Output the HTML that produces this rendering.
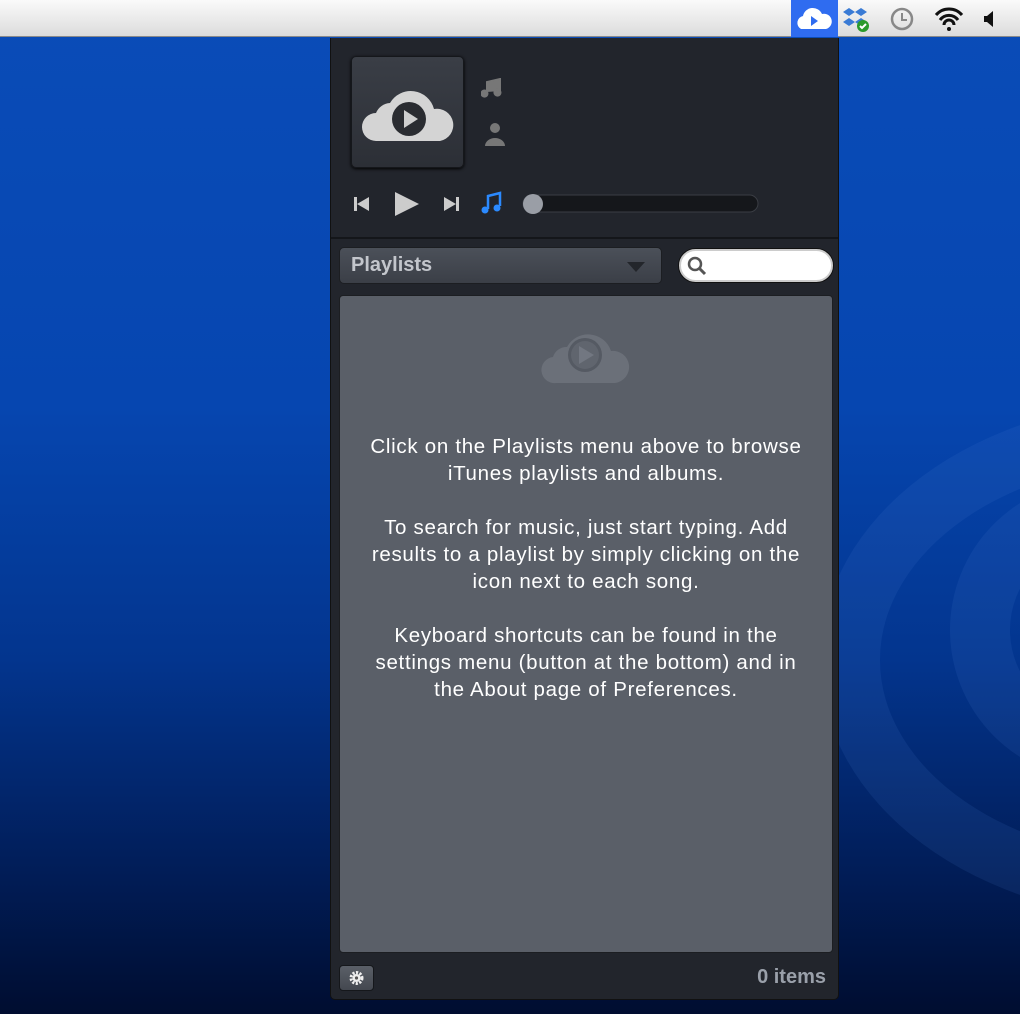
<!DOCTYPE html>
<html><head><meta charset="utf-8"><style>
*{margin:0;padding:0;box-sizing:border-box}
body{width:1020px;height:1014px;overflow:hidden;position:relative;font-family:"Liberation Sans",sans-serif;
background:linear-gradient(180deg,#0a4cb8 0%,#0646b0 40%,#03358e 65%,#011e5a 85%,#000d30 100%)}
.bar{position:absolute;left:0;top:0;width:1020px;height:37px;background:linear-gradient(#fafafa,#dcdcdc);border-bottom:1px solid #8a8a8a}
.arc{position:absolute;border-radius:50%;border:60px solid rgba(80,130,210,.12)}
.panel{position:absolute;left:330px;top:38px;width:509px;height:962px;background:#22252c;border:1px solid #111;border-top:none;border-radius:0 0 5px 5px}
.art{position:absolute;left:20px;top:18px;width:113px;height:112px;border-radius:5px;background:linear-gradient(#3a3e46,#2c2f36);box-shadow:0 1px 3px #000;border:1px solid #15171b}
.sep{position:absolute;left:0;top:199px;width:507px;height:2px;background:#14161a}
.dd{position:absolute;left:8px;top:209px;width:323px;height:37px;border-radius:5px;background:linear-gradient(#4b5059,#3b3f47);border:1px solid #1c1e22;color:#c3c6cc;font-size:20px;font-weight:bold;padding:6px 0 0 11px}
.search{position:absolute;left:348px;top:211px;width:154px;height:33px;border-radius:17px;background:#fff;border:2px solid #ccc;box-shadow:0 0 0 1px #111}
.content{position:absolute;left:8px;top:257px;width:494px;height:658px;background:#5a5f68;border:1px solid #1c1e22;border-radius:4px;color:#fff;text-align:center;font-size:20.5px;letter-spacing:0.7px;line-height:27px}
.content p{margin-bottom:27px;white-space:nowrap}
.gear{position:absolute;left:8px;top:927px;width:35px;height:26px;border-radius:4px;background:linear-gradient(#5a5f68,#444850);border:1px solid #15171b}
.items{position:absolute;right:12px;top:928px;color:#9aa0aa;font-size:20px;font-weight:bold}
</style></head><body>
<div class="arc" style="left:820px;top:400px;width:700px;height:520px"></div>
<div class="arc" style="left:950px;top:480px;width:300px;height:300px"></div>
<div class="bar">
 <div style="position:absolute;left:791px;top:0;width:47px;height:37px;background:#2f6cf0"></div>
 <svg style="position:absolute;left:791px;top:0" width="229" height="37">
  <path d="M10 29 a7 7 0 0 1 2-13 a10 10 0 0 1 19-2 a7 7 0 0 1 4 15z" fill="#fff"/>
  <path d="M20 16 l7 5 -7 5z" fill="#2f6cf0"/>
  <g fill="#3a7bd5"><path d="M58 8 l6 4 -6 4 -6-4z M70 8 l6 4 -6 4 -6-4z M58 18 l6 4 -6 4 -6-4z M70 18 l6 4 -6 4 -6-4z"/></g>
  <circle cx="72" cy="26" r="6" fill="#2a9a2a"/>
  <path d="M69 26 l2 2 4-4" stroke="#fff" stroke-width="2" fill="none"/>
  <circle cx="111" cy="19" r="10" fill="none" stroke="#888" stroke-width="2.5"/>
  <path d="M111 13 v7 h5" stroke="#888" stroke-width="2" fill="none"/>
  <path d="M145 15 a17 17 0 0 1 26 0 M149 20 a11 11 0 0 1 18 0 M153 25 a5 5 0 0 1 10 0" stroke="#111" stroke-width="3" fill="none"/>
  <circle cx="158" cy="29" r="2" fill="#111"/>
  <path d="M193 16 h3 l6-5 v16 l-6-5 h-3z" fill="#111"/>
 </svg>
</div>
<div class="panel">
 <div class="art"><svg width="113" height="112">
  <path d="M24 84 a14 14 0 0 1 0-28 a16 16 0 0 1 14-10 a24 24 0 0 1 44 6 a16 16 0 0 1 6 32z" fill="#d4d4d4"/>
  <circle cx="57" cy="62" r="17" fill="#2a2c31"/><path d="M52 53 l14 9 -14 9z" fill="#cfcfcf"/></svg></div>
 <svg style="position:absolute;left:150px;top:40px" width="30" height="75">
  <path d="M6 14 v-10 l13-3 v12 M6 14 a3 3 0 1 1-1-1 M19 13 a3 3 0 1 1-1-1" stroke="#777" stroke-width="2" fill="#777"/>
  <circle cx="14" cy="50" r="5" fill="#777"/><path d="M4 68 a10 8 0 0 1 20 0z" fill="#777"/>
 </svg>
 <svg style="position:absolute;left:20px;top:150px" width="420" height="35">
  <path d="M3 9 h3 v14 h-3z M18 9 v14 l-12-7z" fill="#ccc"/>
  <path d="M44 4 l24 12 -24 12z" fill="#ccc"/>
  <path d="M93 9 v14 l12-7z M105 9 h3 v14 h-3z" fill="#ccc"/>
  <path d="M137 21 v-13 l12-3 v13" stroke="#2b8aff" stroke-width="2.5" fill="none"/>
  <circle cx="134" cy="22" r="3.5" fill="#2b8aff"/><circle cx="146" cy="20" r="3.5" fill="#2b8aff"/>
  <rect x="172" y="7" width="235" height="17" rx="8.5" fill="#15171b" stroke="#3a3d44"/>
  <circle cx="182" cy="16" r="10" fill="#9a9ea6"/>
 </svg>
 <div class="sep"></div>
 <div class="dd">Playlists<svg style="position:absolute;right:16px;top:14px" width="18" height="10"><path d="M0 0 h18 l-9 10z" fill="#23262b"/></svg></div>
 <div class="search"><svg style="position:absolute;left:6px;top:5px" width="20" height="20"><circle cx="8" cy="8" r="6" stroke="#555" stroke-width="2.5" fill="none"/><path d="M12 12 l6 6" stroke="#555" stroke-width="3"/></svg></div>
 <div class="content">
  <svg style="display:block;margin:22px auto 0" width="96" height="66"><path d="M18 65 a13 13 0 0 1-3-26 a14 14 0 0 1 14-10 a24 24 0 0 1 44 4 a16 16 0 0 1 4 32z" fill="#6b7079"/><circle cx="47" cy="37" r="17" fill="#555a63"/><circle cx="47" cy="37" r="14" fill="#60656e"/><path d="M41 28 l15 9 -15 9z" fill="#727781"/></svg>
  <div style="margin-top:49px">
  <p>Click on the Playlists menu above to browse<br>iTunes playlists and albums.</p>
  <p>To search for music, just start typing. Add<br>results to a playlist by simply clicking on the<br>icon next to each song.</p>
  <p>Keyboard shortcuts can be found in the<br>settings menu (button at the bottom) and in<br>the About page of Preferences.</p></div>
 </div>
 <div class="gear"><svg width="33" height="24"><circle cx="16.5" cy="12" r="5.5" fill="none" stroke="#eee" stroke-width="3" stroke-dasharray="2.2 1.4"/><circle cx="16.5" cy="12" r="4" fill="#eee"/><circle cx="16.5" cy="12" r="1.6" fill="#555"/></svg></div>
 <div class="items">0 items</div>
</div>
</body></html>
